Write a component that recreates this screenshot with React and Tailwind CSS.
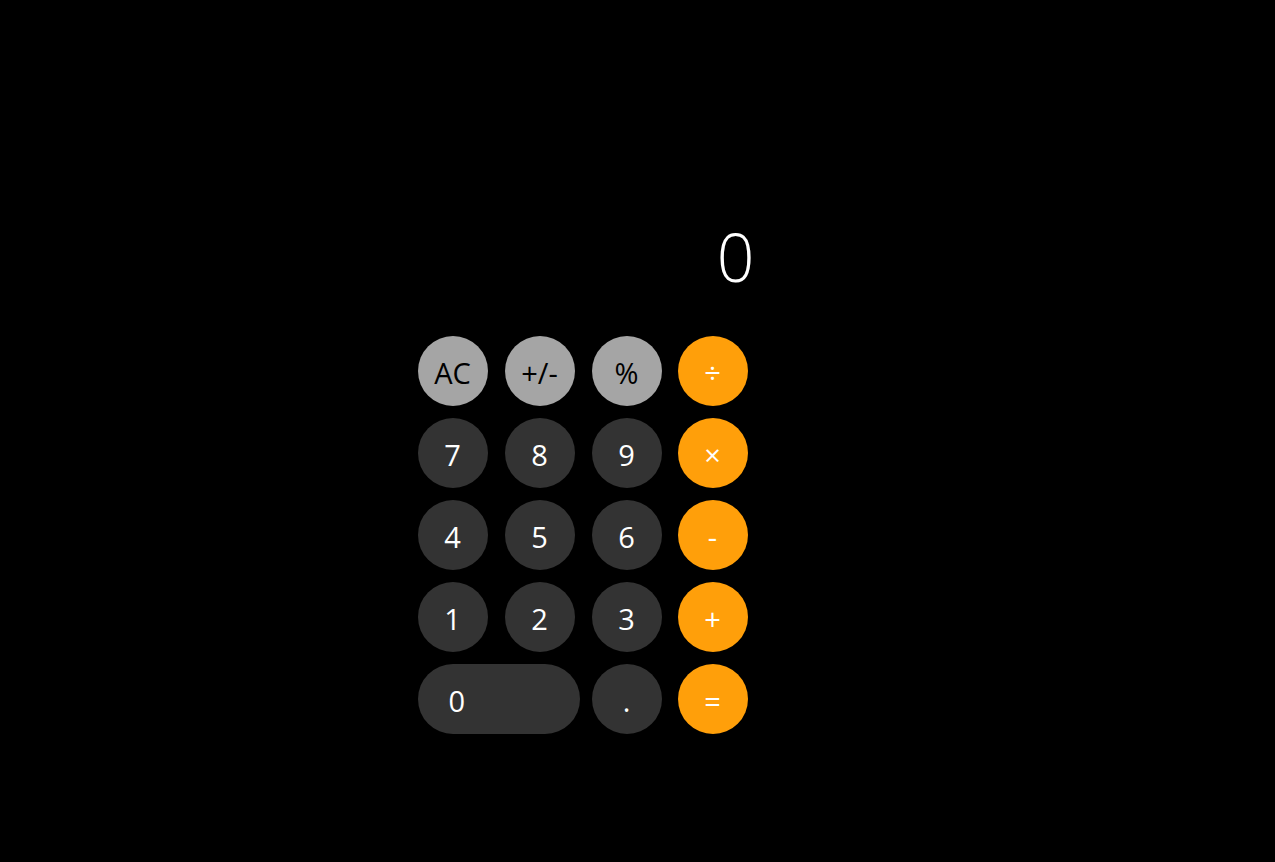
const keys = [
  [
    { label: 'AC', kind: 'fn' },
    { label: '+/-', kind: 'fn' },
    { label: '%', kind: 'fn' },
    { label: '÷', kind: 'op' },
  ],
  [
    { label: '7' },
    { label: '8' },
    { label: '9' },
    { label: '×', kind: 'op' },
  ],
  [
    { label: '4' },
    { label: '5' },
    { label: '6' },
    { label: '-', kind: 'op' },
  ],
  [
    { label: '1' },
    { label: '2' },
    { label: '3' },
    { label: '+', kind: 'op' },
  ],
  [
    { label: '0', wide: true },
    { label: '.' },
    { label: '=', kind: 'op' },
  ],
]

function Key({ label, kind, wide }) {
  const color =
    kind === 'fn'
      ? 'bg-[#a5a5a5] text-black'
      : kind === 'op'
        ? 'bg-[#ff9f0a] text-white'
        : 'bg-[#333333] text-white'

  if (wide) {
    return (
      <button className={`col-span-2 w-[162px] h-[70px] rounded-full flex items-center justify-start pl-[31px] pt-[3px] text-[29px] leading-none ${color}`}>
        {label}
      </button>
    )
  }

  return (
    <button className={`w-[70px] h-[70px] rounded-full flex items-center justify-center pt-[3px] text-[29px] leading-none ${color}`}>
      {label}
    </button>
  )
}

export default function App() {
  return (
    <div className="min-h-screen bg-black" style={{ fontFamily: '"Open Sans", "Noto Sans", sans-serif' }}>
      <div className="mx-auto w-[440px] pt-[223px]">
        <div className="w-[337px] text-right text-white text-[66px] font-light leading-none h-[92px]">0</div>
        <div className="mt-[21px] w-[330px] grid grid-cols-[87px_87px_86px_70px] gap-y-[12px]">
          {keys.flat().map((k, i) => (
            <Key key={i} {...k} />
          ))}
        </div>
      </div>
    </div>
  )
}
